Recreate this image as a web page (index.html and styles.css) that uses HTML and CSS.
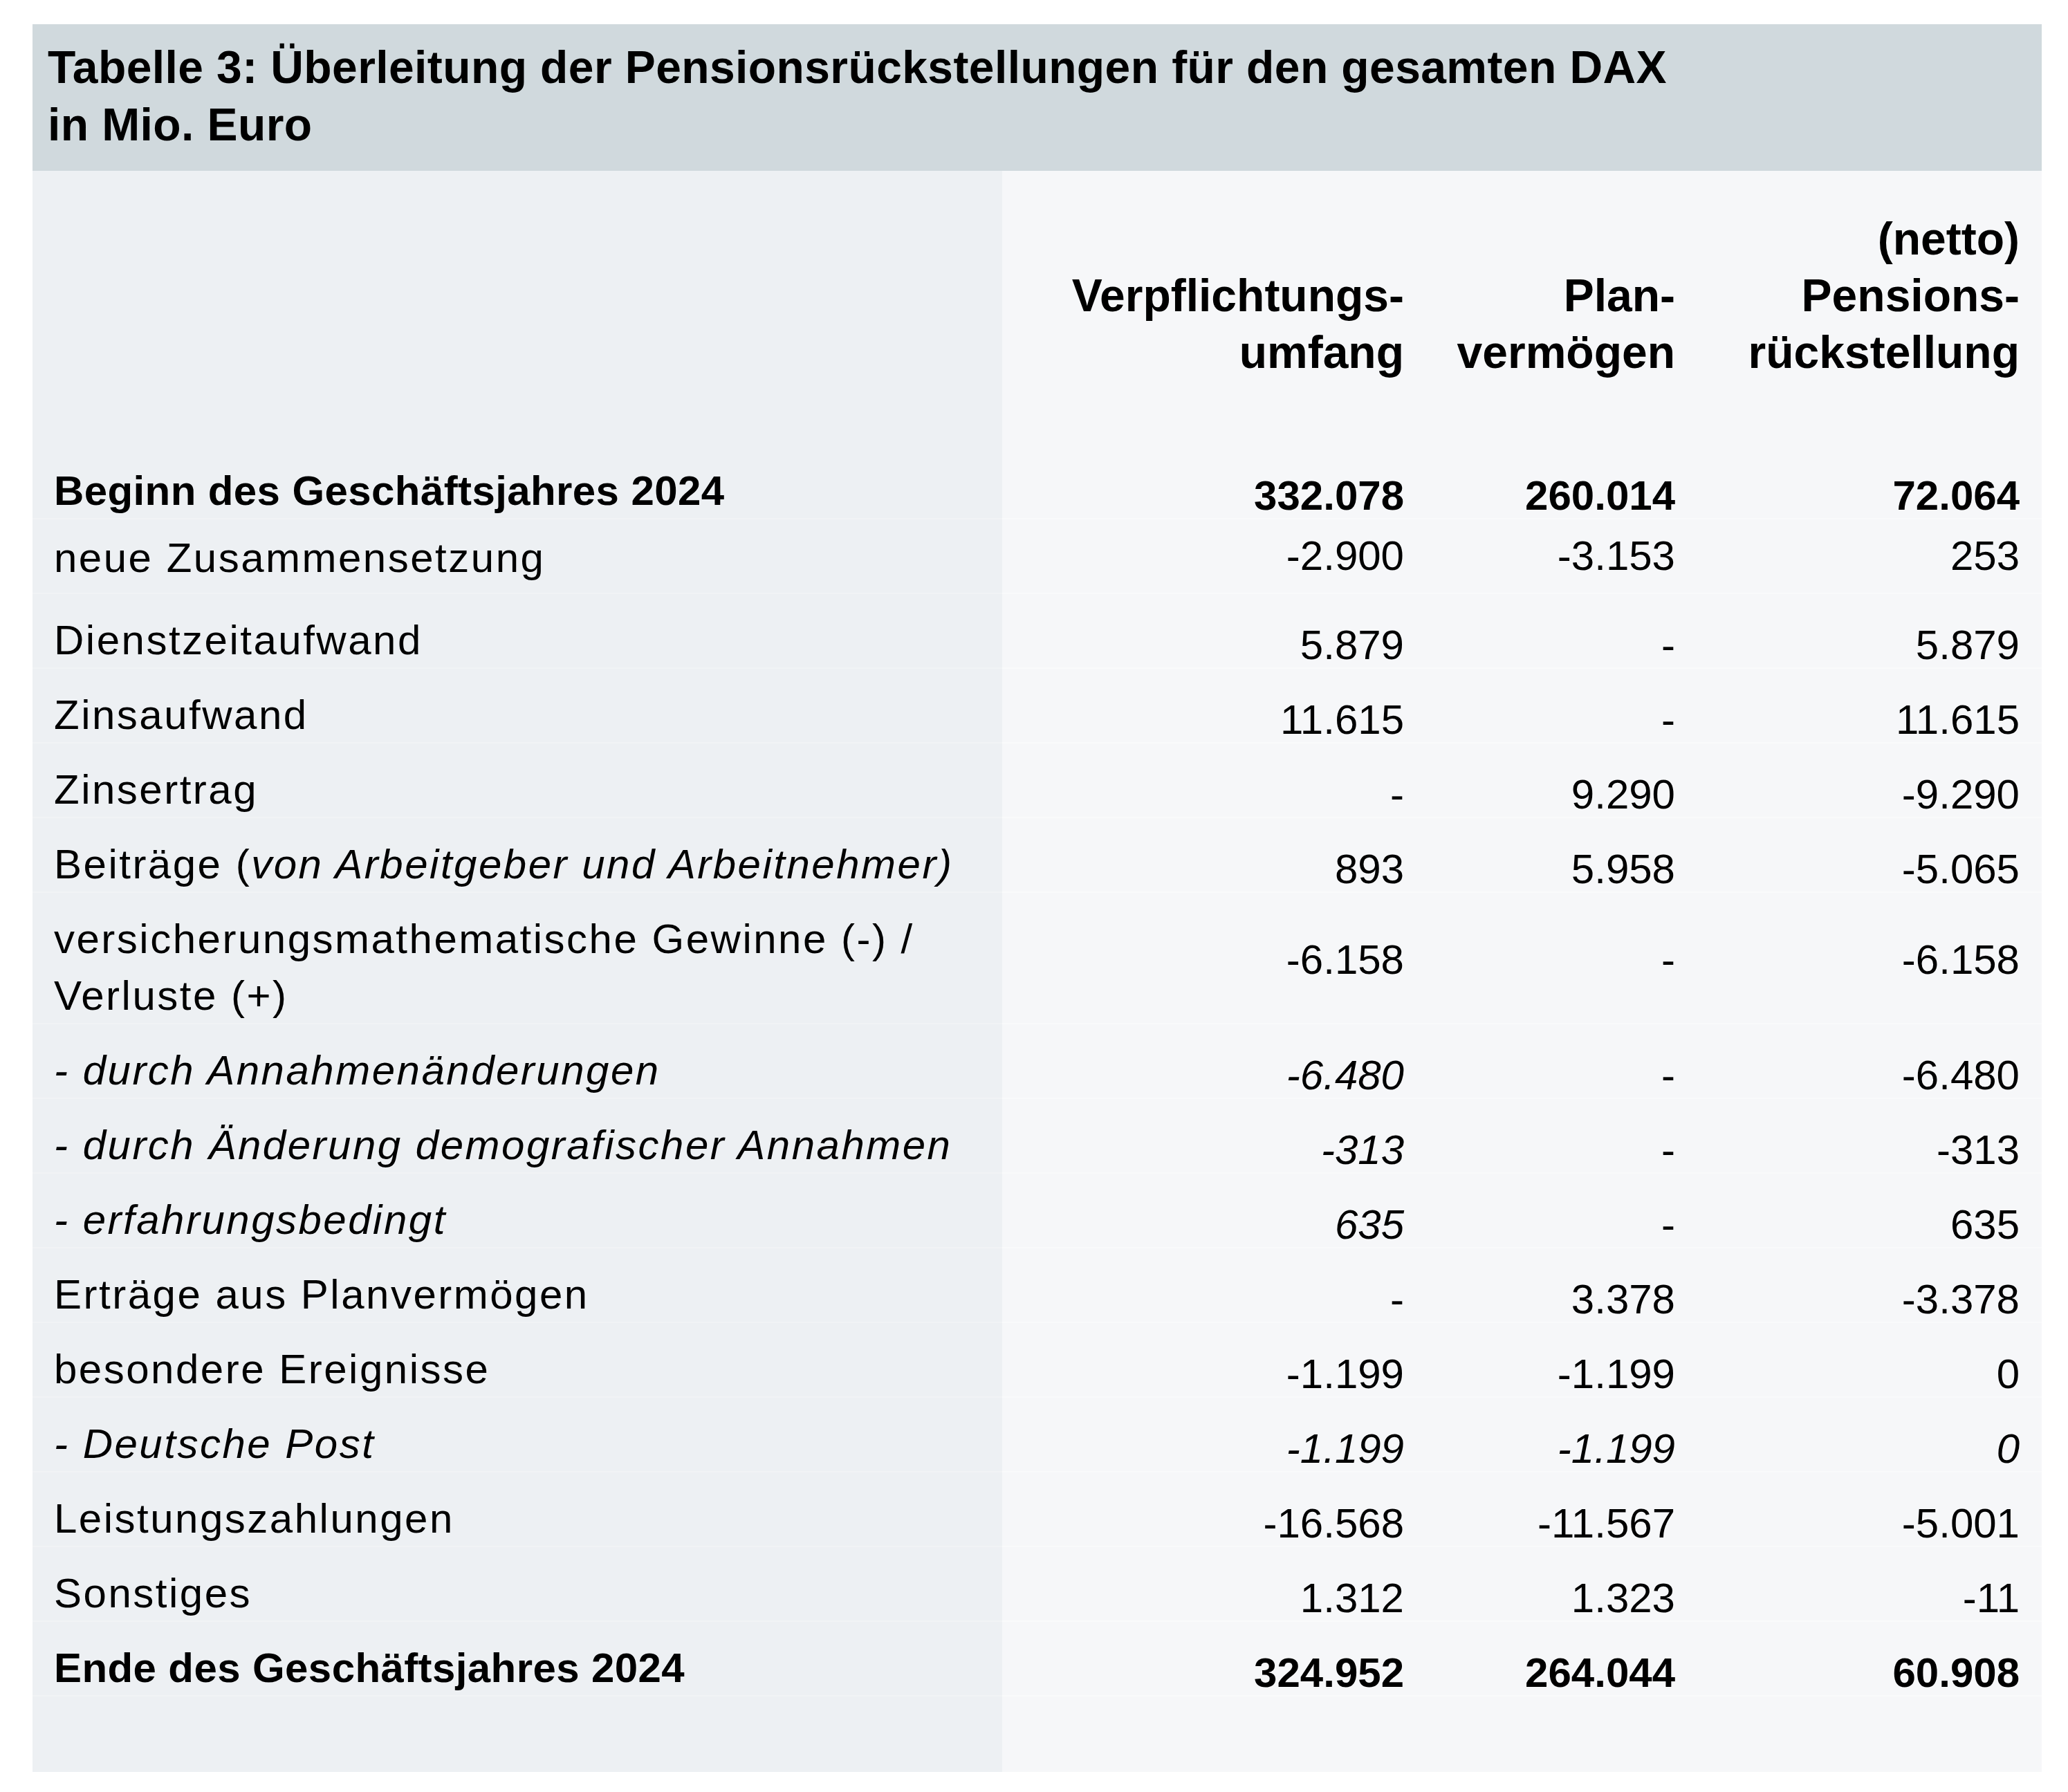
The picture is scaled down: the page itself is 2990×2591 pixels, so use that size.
FILE: index.html
```html
<!DOCTYPE html>
<html lang="de">
<head>
<meta charset="utf-8">
<title>Tabelle 3: Überleitung der Pensionsrückstellungen</title>
<link rel="stylesheet" href="styles.css">
</head>
<body>
<div class="card">
  <h1 class="card__title">Tabelle 3: Überleitung der Pensionsrückstellungen für den gesamten DAX<br>in Mio. Euro</h1>
  <table class="pension">
    <colgroup>
      <col class="pension__col-label">
      <col class="pension__col-a">
      <col class="pension__col-b">
      <col class="pension__col-c">
    </colgroup>
    <thead>
      <tr>
        <th class="pension__head-label"></th>
        <th class="pension__head">Verpflichtungs-<br>umfang</th>
        <th class="pension__head">Plan-<br>vermögen</th>
        <th class="pension__head">(netto)<br>Pensions-<br>rückstellung</th>
      </tr>
    </thead>
    <tbody>
      <tr class="row row--bold">
        <td class="label">Beginn des Geschäftsjahres 2024</td>
        <td class="num">332.078</td><td class="num">260.014</td><td class="num">72.064</td>
      </tr>
      <tr class="row row--raised">
        <td class="label">neue Zusammensetzung</td>
        <td class="num">-2.900</td><td class="num">-3.153</td><td class="num">253</td>
      </tr>
      <tr class="row">
        <td class="label">Dienstzeitaufwand</td>
        <td class="num">5.879</td><td class="num">-</td><td class="num">5.879</td>
      </tr>
      <tr class="row">
        <td class="label">Zinsaufwand</td>
        <td class="num">11.615</td><td class="num">-</td><td class="num">11.615</td>
      </tr>
      <tr class="row">
        <td class="label">Zinsertrag</td>
        <td class="num">-</td><td class="num">9.290</td><td class="num">-9.290</td>
      </tr>
      <tr class="row">
        <td class="label">Beiträge (<em>von Arbeitgeber und Arbeitnehmer)</em></td>
        <td class="num">893</td><td class="num">5.958</td><td class="num">-5.065</td>
      </tr>
      <tr class="row row--tall">
        <td class="label">versicherungsmathematische Gewinne (-) / Verluste (+)</td>
        <td class="num">-6.158</td><td class="num">-</td><td class="num">-6.158</td>
      </tr>
      <tr class="row">
        <td class="label"><em>- durch Annahmenänderungen</em></td>
        <td class="num"><em>-6.480</em></td><td class="num">-</td><td class="num">-6.480</td>
      </tr>
      <tr class="row">
        <td class="label"><em>- durch Änderung demografischer Annahmen</em></td>
        <td class="num"><em>-313</em></td><td class="num">-</td><td class="num">-313</td>
      </tr>
      <tr class="row">
        <td class="label"><em>- erfahrungsbedingt</em></td>
        <td class="num"><em>635</em></td><td class="num">-</td><td class="num">635</td>
      </tr>
      <tr class="row">
        <td class="label">Erträge aus Planvermögen</td>
        <td class="num">-</td><td class="num">3.378</td><td class="num">-3.378</td>
      </tr>
      <tr class="row">
        <td class="label">besondere Ereignisse</td>
        <td class="num">-1.199</td><td class="num">-1.199</td><td class="num">0</td>
      </tr>
      <tr class="row">
        <td class="label"><em>- Deutsche Post</em></td>
        <td class="num"><em>-1.199</em></td><td class="num"><em>-1.199</em></td><td class="num"><em>0</em></td>
      </tr>
      <tr class="row">
        <td class="label">Leistungszahlungen</td>
        <td class="num">-16.568</td><td class="num">-11.567</td><td class="num">-5.001</td>
      </tr>
      <tr class="row">
        <td class="label">Sonstiges</td>
        <td class="num">1.312</td><td class="num">1.323</td><td class="num">-11</td>
      </tr>
      <tr class="row row--bold">
        <td class="label">Ende des Geschäftsjahres 2024</td>
        <td class="num">324.952</td><td class="num">264.044</td><td class="num">60.908</td>
      </tr>
    </tbody>
    <tfoot>
      <tr class="spacer">
        <td class="spacer__label"></td><td class="spacer__cell"></td><td class="spacer__cell"></td><td class="spacer__cell"></td>
      </tr>
    </tfoot>
  </table>
</div>
</body>
</html>
```

FILE: styles.css
```css
html, body {
  margin: 0;
  padding: 0;
  background: #ffffff;
}

body {
  font-family: "Liberation Sans", Arial, Helvetica, sans-serif;
  color: #000000;
}

.card {
  width: 2905px;
  margin: 35px 0 0 47px;
}

.card__title {
  margin: 0;
  background: #d0d9dd;
  padding: 21px 22px 25px;
  font-size: 66px;
  line-height: 83px;
  font-weight: 700;
  letter-spacing: 0.4px;
}

.pension {
  width: 2905px;
  table-layout: fixed;
  border-collapse: collapse;
  border-spacing: 0;
}

.pension__col-label { width: 1402px; }
.pension__col-a { width: 613px; }
.pension__col-b { width: 392px; }
.pension__col-c { width: 498px; }

.pension th,
.pension td {
  padding: 0;
  vertical-align: top;
}

.pension__head-label {
  background: #edf0f3;
}

.pension__head {
  background: #f6f7f9;
  padding: 57px 32px 93px 0 !important;
  vertical-align: bottom !important;
  text-align: right;
  font-size: 66px;
  line-height: 82px;
  font-weight: 700;
}

.label {
  background: #edf0f3;
  padding: 26px 30px 0 31px !important;
  font-size: 60px;
  line-height: 82px;
  letter-spacing: 2.5px;
  text-align: left;
  box-shadow: inset 0 -2px 0 rgba(255, 255, 255, 0.22);
}

.num {
  background: #f6f7f9;
  padding: 40px 32px 0 0 !important;
  font-size: 60px;
  line-height: 68px;
  text-align: right;
  white-space: nowrap;
  box-shadow: inset 0 -2px 0 rgba(255, 255, 255, 0.35);
}

.pension em {
  font-style: italic;
}

.row--bold .label {
  font-weight: 700;
  letter-spacing: 0.4px;
}

.row--bold .num {
  font-weight: 700;
}

.row--raised .label {
  padding-top: 15px !important;
  padding-bottom: 11px !important;
}

.row--raised .num {
  padding-top: 19px !important;
  padding-bottom: 21px !important;
}

.row--tall .num {
  padding-top: 63px !important;
}

.spacer__label {
  background: #edf0f3;
  height: 109px;
}

.spacer__cell {
  background: #f6f7f9;
  height: 109px;
}
```
